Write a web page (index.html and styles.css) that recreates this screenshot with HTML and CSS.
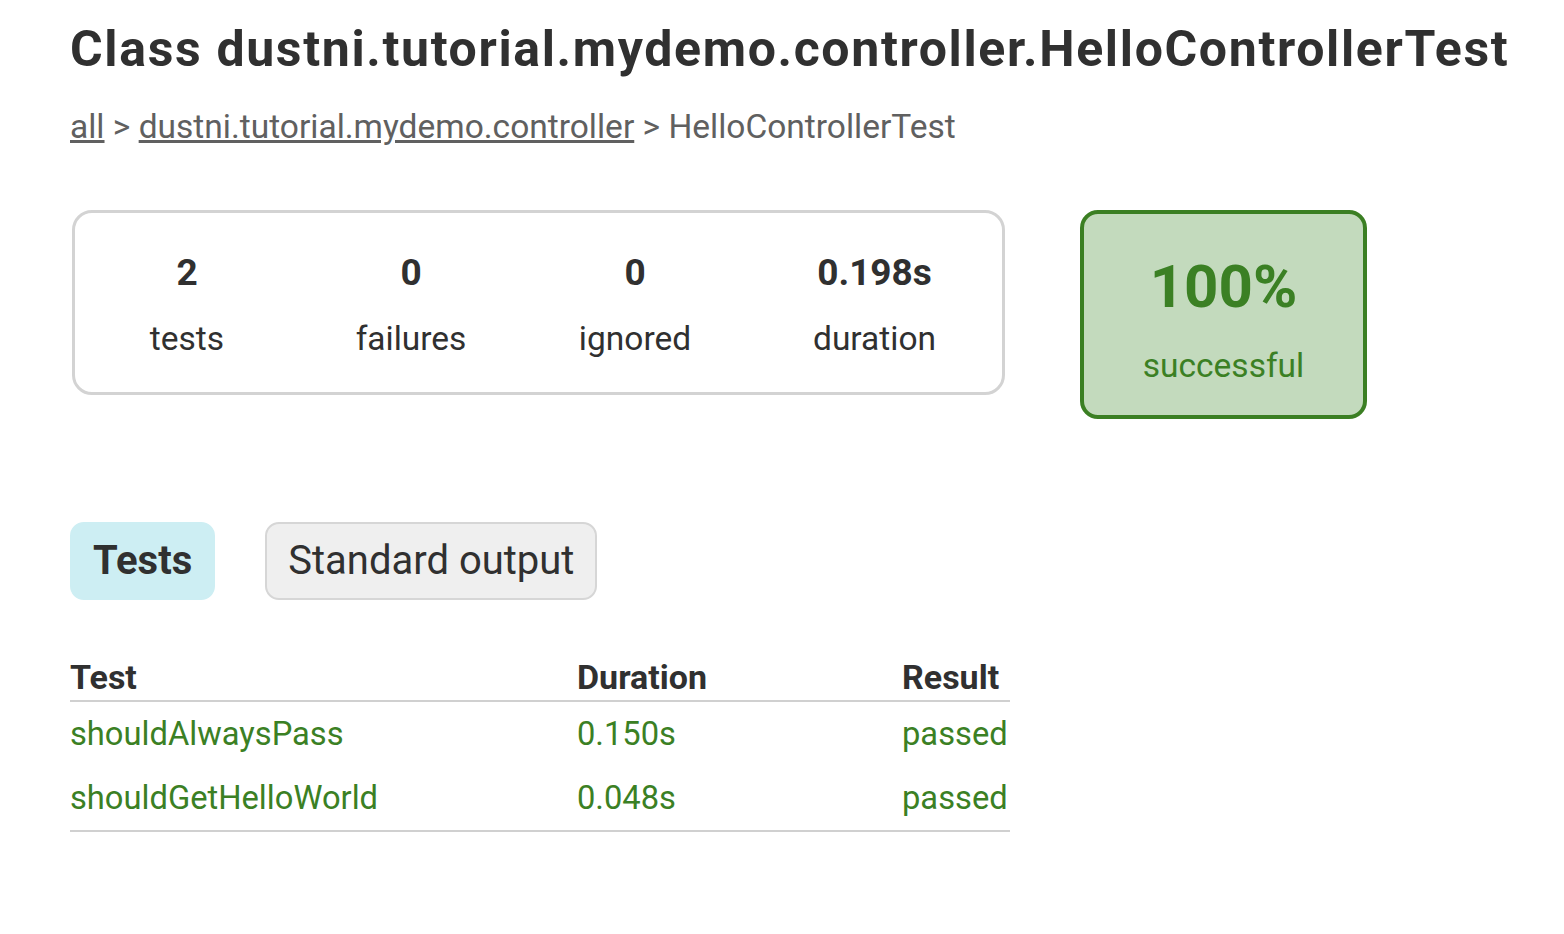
FILE: index.html
```html
<!DOCTYPE html>
<html lang="en">
<head>
<meta charset="utf-8">
<title>Test results - Class dustni.tutorial.mydemo.controller.HelloControllerTest</title>
<link rel="stylesheet" href="styles.css">
</head>
<body>
<div class="content">
  <h1 class="title">Class dustni.tutorial.mydemo.controller.HelloControllerTest</h1>
  <div class="breadcrumbs">
    <a href="#" class="crumb">all</a> &gt;
    <a href="#" class="crumb">dustni.tutorial.mydemo.controller</a> &gt; HelloControllerTest
  </div>

  <div class="summary">
    <div class="summary-group">
      <div class="info-box">
        <div class="counter">2</div>
        <p class="label">tests</p>
      </div>
      <div class="info-box">
        <div class="counter">0</div>
        <p class="label">failures</p>
      </div>
      <div class="info-box">
        <div class="counter">0</div>
        <p class="label">ignored</p>
      </div>
      <div class="info-box info-box-duration">
        <div class="counter">0.198s</div>
        <p class="label">duration</p>
      </div>
    </div>
    <div class="success-rate">
      <div class="percent">100%</div>
      <p class="label">successful</p>
    </div>
  </div>

  <ul class="tab-links">
    <li class="tab tab-selected">Tests</li>
    <li class="tab">Standard output</li>
  </ul>

  <table class="results">
    <thead>
      <tr>
        <th class="col-test">Test</th>
        <th class="col-duration">Duration</th>
        <th class="col-result">Result</th>
      </tr>
    </thead>
    <tbody>
      <tr class="row-success">
        <td class="col-test">shouldAlwaysPass</td>
        <td class="col-duration">0.150s</td>
        <td class="col-result">passed</td>
      </tr>
      <tr class="row-success">
        <td class="col-test">shouldGetHelloWorld</td>
        <td class="col-duration">0.048s</td>
        <td class="col-result">passed</td>
      </tr>
    </tbody>
  </table>
</div>
</body>
</html>
```

FILE: styles.css
```css
html, body {
  margin: 0;
  padding: 0;
  background: #ffffff;
}

body {
  font-family: Roboto, "Liberation Sans", Arial, sans-serif;
  font-size: 33.5px;
  color: #303030;
}

.content {
  padding: 19px 0 40px 70px;
}

.title {
  margin: 0;
  font-size: 50px;
  line-height: 60px;
  font-weight: 700;
  letter-spacing: 1.65px;
  color: #303030;
  white-space: nowrap;
}

.breadcrumbs {
  margin-top: 28px;
  font-size: 33.5px;
  line-height: 40px;
  color: #606060;
}

.crumb {
  color: #606060;
  text-decoration: underline;
}

.summary {
  display: flex;
  align-items: flex-start;
  margin-top: 63px;
}

.summary-group {
  display: flex;
  margin-left: 2px;
  width: 927px;
  border: 3px solid #d3d3d3;
  border-radius: 20px;
}

.info-box {
  width: 224px;
  padding: 38px 0 33px;
  text-align: center;
}

.info-box-duration {
  width: 255px;
}

.counter {
  font-size: 37px;
  line-height: 44px;
  font-weight: 700;
  color: #303030;
}

.label {
  margin: 24px 0 0;
  font-size: 33.5px;
  line-height: 40px;
}

.success-rate {
  margin-left: 75px;
  width: 279px;
  padding: 38px 0 29px;
  text-align: center;
  background: #c3dabd;
  border: 4px solid #3b7f23;
  border-radius: 18px;
  color: #3b8024;
}

.percent {
  font-size: 60px;
  line-height: 70px;
  font-weight: 700;
}

.success-rate .label {
  margin-top: 24px;
}

.tab-links {
  display: flex;
  gap: 50px;
  list-style: none;
  margin: 103px 0 0;
  padding: 0;
}

.tab {
  padding: 9px 21px;
  font-size: 40px;
  line-height: 56px;
  background: #efefef;
  border: 2px solid #d6d6d6;
  border-radius: 14px;
  color: #303030;
}

.tab-selected {
  font-weight: 700;
  background: #cdeef3;
  border-color: #cdeef3;
}

.results {
  margin-top: 57px;
  border-collapse: collapse;
  border-spacing: 0;
  border-bottom: 2px solid #d0d0d0;
}

.results th {
  padding: 0 0 3px;
  font-size: 34px;
  line-height: 40px;
  font-weight: 700;
  text-align: left;
  border-bottom: 2px solid #d0d0d0;
}

.results td {
  padding: 12px 0;
  font-size: 32.7px;
  line-height: 40px;
  text-align: left;
}

.row-success td {
  color: #3b8024;
}

.col-test {
  width: 507px;
}

.col-duration {
  width: 325px;
}

.col-result {
  width: 108px;
}
```
